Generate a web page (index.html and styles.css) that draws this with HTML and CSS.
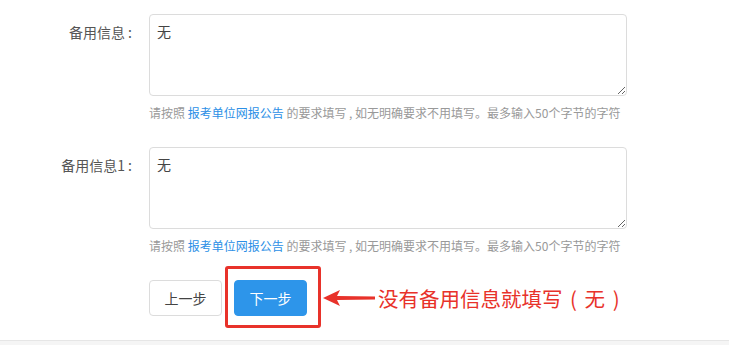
FILE: index.html
```html
<!DOCTYPE html>
<html lang="zh-CN">
<head>
  <meta charset="UTF-8">
  <title>备用信息</title>
  <link rel="stylesheet" href="styles.css">
</head>
<body>
  <div class="form">
    <div class="row">
      <label class="label">备用信息 :</label>
      <div class="field">
        <textarea class="input">无</textarea>
        <p class="hint">请按照 <a href="#">报考单位网报公告</a> 的要求填写 , 如无明确要求不用填写。最多输入50个字节的字符</p>
      </div>
    </div>

    <div class="row">
      <label class="label">备用信息1 :</label>
      <div class="field">
        <textarea class="input">无</textarea>
        <p class="hint">请按照 <a href="#">报考单位网报公告</a> 的要求填写 , 如无明确要求不用填写。最多输入50个字节的字符</p>
      </div>
    </div>

    <div class="actions">
      <button class="btn">上一步</button>
      <span class="marked">
        <button class="btn primary">下一步</button>
      </span>
      <svg class="arrow" width="52" height="18" viewBox="0 0 52 18">
        <polygon points="0,9 17,1 14,7 52,7.5 52,10.5 14,11 17,17" fill="#e8322a"/>
      </svg>
      <span class="note">没有备用信息就填写 ( 无 )</span>
    </div>
  </div>
  <div class="footer"></div>
</body>
</html>
```

FILE: styles.css
```css
body {
  margin: 0;
  background-color: #ffffff;
  font-family: 'Noto Sans CJK SC', 'Liberation Sans', sans-serif;
  color: #555;
}
.form {
  padding-top: 14px;
}
.row {
  display: grid;
  grid-template-columns: 132px 478px;
  column-gap: 17px;
  margin-bottom: 25px;
}
.label {
  text-align: right;
  font-size: 14px;
  line-height: 18px;
  padding-top: 9px;
  color: #555;
  white-space: nowrap;
}
.input {
  display: block;
  box-sizing: border-box;
  width: 478px;
  height: 82px;
  margin: 0;
  padding: 6px 7px;
  border: 1px solid #dcdcdc;
  border-radius: 4px;
  font-family: 'Noto Sans CJK SC', sans-serif;
  font-size: 14px;
  line-height: 20px;
  color: #444;
  resize: vertical;
}
.hint {
  margin: 8px 0 0;
  font-size: 12px;
  line-height: 18px;
  color: #999;
  white-space: nowrap;
}
.hint a {
  color: #2b8fe6;
  text-decoration: none;
}
.actions {
  display: flex;
  align-items: center;
  margin-left: 149px;
}
.btn {
  box-sizing: border-box;
  width: 73px;
  height: 36px;
  padding: 0;
  border: 1px solid #dcdcdc;
  border-radius: 4px;
  background-color: #fff;
  color: #444;
  font-family: 'Noto Sans CJK SC', sans-serif;
  font-size: 14px;
  cursor: pointer;
}
.btn.primary {
  border-color: #2d95ea;
  background-color: #2d95ea;
  color: #fff;
}
.marked {
  position: relative;
  display: flex;
  margin-left: 12px;
}
.marked::after {
  content: '';
  position: absolute;
  top: -14px;
  left: -9px;
  right: -14px;
  bottom: -12px;
  border: 3px solid #e8322a;
  border-radius: 3px;
}
.arrow {
  display: block;
  margin-left: 16px;
}
.note {
  margin-left: 3px;
  font-size: 20.5px;
  line-height: 26px;
  color: #e8322a;
  white-space: pre;
  word-spacing: 3px;
}
.footer {
  margin-top: 24px;
  height: 20px;
  border-top: 1px solid #e6e6e6;
  background-color: #f5f5f5;
}
```
